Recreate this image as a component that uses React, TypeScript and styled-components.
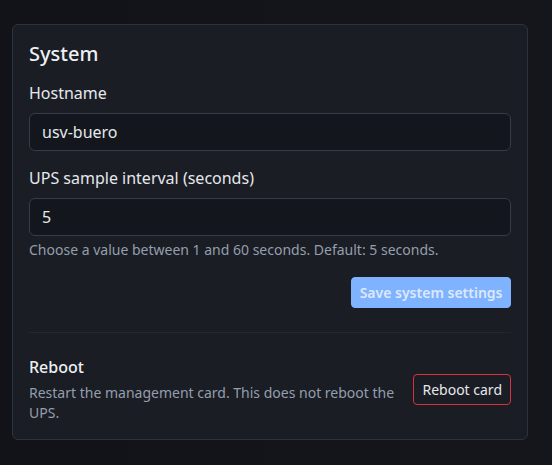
import React, { useState } from 'react'
import styled, { createGlobalStyle } from 'styled-components'

const GlobalStyle = createGlobalStyle`
  html, body {
    margin: 0;
    padding: 0;
    background: #121419;
    font-family: 'Noto Sans', 'Open Sans', sans-serif;
    color: #e6e8ec;
  }
  * {
    box-sizing: border-box;
  }
`

const Page = styled.div`
  min-height: 465px;
  padding: 24px 24px 24px 12px;
  background: linear-gradient(90deg, #111318 0%, #14161c 100%);
`

const Card = styled.section`
  display: flex;
  flex-direction: column;
  width: 516px;
  padding: 16px;
  background: #1a1d24;
  border: 1px solid #2d323d;
  border-radius: 6px;
`

const Title = styled.h2`
  margin: 1px 0 15px;
  font-size: 20px;
  font-weight: 500;
  line-height: 24px;
  color: #eef0f3;
`

const Field = styled.div<{ spaced?: boolean }>`
  display: flex;
  flex-direction: column;
  margin-top: ${({ spaced }) => (spaced ? '15px' : '0')};
`

const Label = styled.label`
  margin-bottom: 8px;
  font-size: 16px;
  line-height: 24px;
  color: #e6e8ec;
`

const Input = styled.input`
  height: 38px;
  padding: 0 12px;
  background: #13161c;
  border: 1px solid #363c4a;
  border-radius: 6px;
  font-family: inherit;
  font-size: 16px;
  color: #e6e8ec;
  outline: none;
`

const Help = styled.div`
  margin-top: 3px;
  font-size: 14px;
  line-height: 21px;
  color: #959eac;
`

const Actions = styled.div`
  display: flex;
  justify-content: flex-end;
  margin-top: 17px;
`

const Button = styled.button<{ variant: 'primary' | 'danger' }>`
  height: 31px;
  padding: 0 ${({ variant }) => (variant === 'primary' ? '7.5px' : '8px')};
  border-radius: 4px;
  font-family: inherit;
  font-size: 14px;
  line-height: 21px;
  cursor: pointer;
  font-weight: ${({ variant }) => (variant === 'primary' ? 600 : 400)};
  background: ${({ variant }) => (variant === 'primary' ? '#80b3ff' : 'transparent')};
  color: ${({ variant }) => (variant === 'primary' ? '#dce8fc' : '#e6e8ec')};
  border: 1px solid ${({ variant }) => (variant === 'primary' ? '#80b3ff' : '#d9303f')};
  &:disabled {
    cursor: default;
  }
`

const Divider = styled.hr`
  margin: 24px 0 22px;
  border: none;
  border-top: 1px solid #23272f;
`

const RebootRow = styled.div`
  display: flex;
  align-items: center;
  gap: 16px;
`

const RebootText = styled.div`
  flex: 1;
  display: flex;
  flex-direction: column;
  gap: 4px;
`

const RebootTitle = styled.div`
  font-size: 16px;
  font-weight: 500;
  line-height: 24px;
  color: #eef0f3;
`

const RebootDesc = styled.div`
  font-size: 14px;
  line-height: 20px;
  color: #959eac;
`

export default function App() {
  const [hostname, setHostname] = useState('usv-buero')
  const [interval, setInterval] = useState('5')

  return (
    <>
      <GlobalStyle />
      <Page>
        <Card>
          <Title>System</Title>
          <Field>
            <Label htmlFor="hostname">Hostname</Label>
            <Input id="hostname" value={hostname} onChange={(e) => setHostname(e.target.value)} />
          </Field>
          <Field spaced>
            <Label htmlFor="interval">UPS sample interval (seconds)</Label>
            <Input id="interval" value={interval} onChange={(e) => setInterval(e.target.value)} />
            <Help>Choose a value between 1 and 60 seconds. Default: 5 seconds.</Help>
          </Field>
          <Actions>
            <Button variant="primary" disabled>
              Save system settings
            </Button>
          </Actions>
          <Divider />
          <RebootRow>
            <RebootText>
              <RebootTitle>Reboot</RebootTitle>
              <RebootDesc>Restart the management card. This does not reboot the UPS.</RebootDesc>
            </RebootText>
            <Button variant="danger">Reboot card</Button>
          </RebootRow>
        </Card>
      </Page>
    </>
  )
}
